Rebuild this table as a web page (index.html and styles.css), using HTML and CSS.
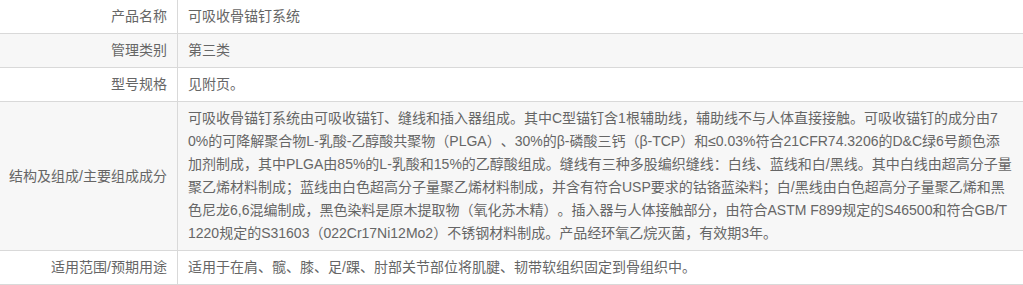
FILE: index.html
```html
<!DOCTYPE html>
<html lang="zh-CN">
<head>
<meta charset="utf-8">
<title>产品信息</title>
<link rel="stylesheet" href="styles.css">
</head>
<body>
<table class="info">
  <tr>
    <th>产品名称</th>
    <td>可吸收骨锚钉系统</td>
  </tr>
  <tr class="alt">
    <th>管理类别</th>
    <td>第三类</td>
  </tr>
  <tr>
    <th>型号规格</th>
    <td>见附页。</td>
  </tr>
  <tr class="alt">
    <th>结构及组成/主要组成成分</th>
    <td>可吸收骨锚钉系统由可吸收锚钉、缝线和插入器组成。其中C型锚钉含1根辅助线，辅助线不与人体直接接触。可吸收锚钉的成分由70%的可降解聚合物L-乳酸-乙醇酸共聚物（PLGA）、30%的β-磷酸三钙（β-TCP）和≤0.03%符合21CFR74.3206的D&amp;C绿6号颜色添加剂制成，其中PLGA由85%的L-乳酸和15%的乙醇酸组成。缝线有三种多股编织缝线：白线、蓝线和白/黑线。其中白线由超高分子量聚乙烯材料制成；蓝线由白色超高分子量聚乙烯材料制成，并含有符合USP要求的钴铬蓝染料；白/黑线由白色超高分子量聚乙烯和黑色尼龙6,6混编制成，黑色染料是原木提取物（氧化苏木精）。插入器与人体接触部分，由符合ASTM F899规定的S46500和符合GB/T1220规定的S31603（022Cr17Ni12Mo2）不锈钢材料制成。产品经环氧乙烷灭菌，有效期3年。</td>
  </tr>
  <tr>
    <th>适用范围/预期用途</th>
    <td>适用于在肩、髋、膝、足/踝、肘部关节部位将肌腱、韧带软组织固定到骨组织中。</td>
  </tr>
</table>
</body>
</html>
```
FILE: styles.css
```css
html, body {
  margin: 0;
  padding: 0;
  background: #fff;
}
.info {
  width: 1023px;
  border-collapse: collapse;
  font-family: "Liberation Sans", "Noto Sans CJK SC", sans-serif;
  font-size: 14px;
  line-height: 23px;
  color: #666;
  text-spacing-trim: space-all;
}
.info th,
.info td {
  padding: 5px 10px;
  border-bottom: 1px solid #d9d9d9;
  vertical-align: middle;
}
.info th {
  width: 167px;
  padding-left: 0;
  white-space: nowrap;
  font-weight: normal;
  text-align: right;
  border-right: 1px solid #d9d9d9;
}
.info td {
  text-align: left;
  word-break: break-all;
}
.info tr.alt {
  background: #f7f7f7;
}
```
